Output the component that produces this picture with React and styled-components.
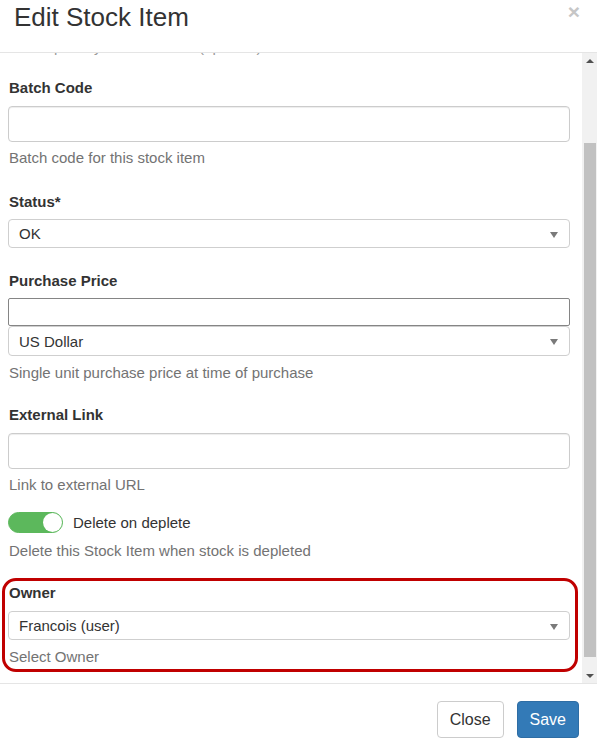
import React from "react";
import styled, { createGlobalStyle } from "styled-components";

const GlobalStyle = createGlobalStyle`
  html, body {
    margin: 0;
    padding: 0;
    background: #fff;
  }
  body {
    font-family: "Liberation Sans", Arial, sans-serif;
    color: #333;
  }
`;

const Modal = styled.div`
  width: 597px;
  height: 742px;
  display: flex;
  flex-direction: column;
  background: #fff;
  overflow: hidden;
`;

const Header = styled.div`
  height: 52px;
  flex: none;
  box-sizing: content-box;
  border-bottom: 1px solid #e5e5e5;
  padding: 0 17px 0 14px;
  display: flex;
  justify-content: space-between;
  align-items: flex-start;
`;

const Title = styled.h4`
  margin: 3px 0 0;
  font-size: 26px;
  line-height: 29px;
  font-weight: 400;
  color: #333;
`;

const CloseX = styled.span`
  margin-top: 1px;
  font-size: 21px;
  line-height: 22px;
  font-weight: 700;
  color: #c6c6c6;
`;

const Body = styled.div`
  height: 630px;
  flex: none;
  display: flex;
`;

const Content = styled.div`
  flex: 1;
  padding: 0 12px 0 8px;
  overflow: hidden;
`;

/* the bottom of a help line scrolled out of view */
const ClippedLine = styled.div`
  box-sizing: content-box;
  height: 2px;
  padding: 0 0 2px 1px;
  overflow: hidden;
  display: flex;
  align-items: flex-end;
  font-size: 15px;
  line-height: 17px;
  color: #999;
`;

const FormGroup = styled.div`
  margin-top: ${(p) => p.$top || 0}px;
`;

const Label = styled.label`
  display: block;
  padding-left: 1px;
  font-size: 15px;
  line-height: 20px;
  font-weight: 700;
  color: #333;
  margin-bottom: ${(p) => (p.$mb == null ? 8 : p.$mb)}px;
`;

const TextInput = styled.div`
  box-sizing: border-box;
  height: ${(p) => p.$h || 36}px;
  border: 1px solid ${(p) => (p.$plain ? "#858585" : "#ccc")};
  border-radius: ${(p) => (p.$plain ? "2px" : "4px")};
  box-shadow: ${(p) => (p.$plain ? "none" : "inset 0 1px 1px rgba(0,0,0,.075)")};
  background: #fff;
`;

const Select = styled.div`
  box-sizing: border-box;
  height: ${(p) => p.$h || 29}px;
  border: 1px solid #cfcfcf;
  border-radius: 4px;
  padding: 0 11px 0 10px;
  display: flex;
  align-items: center;
  justify-content: space-between;
  font-size: 15px;
  color: #333;
  background: #fff;
`;

const Caret = styled.span`
  width: 0;
  height: 0;
  border-left: 4.5px solid transparent;
  border-right: 4.5px solid transparent;
  border-top: 6px solid #7a7a7a;
  margin-top: 2px;
`;

const Help = styled.div`
  margin-top: ${(p) => (p.$mt == null ? 6 : p.$mt)}px;
  padding-left: 1px;
  font-size: 15px;
  line-height: 21px;
  color: #737373;
`;

const ToggleRow = styled.div`
  display: flex;
  align-items: center;
  gap: 10px;
  font-size: 15px;
  color: #333;
`;

const Toggle = styled.span`
  position: relative;
  box-sizing: border-box;
  width: 55px;
  height: 21px;
  border-radius: 11px;
  background: #5cb85c;
  border: 1px solid #5cb85c;
`;

const Knob = styled.span`
  position: absolute;
  top: 0;
  right: 0;
  width: 19px;
  height: 19px;
  border-radius: 50%;
  background: #fff;
`;

const Highlight = styled.div`
  margin: ${(p) => p.$top}px -8px 0 -6px;
  padding: 2px 5px 2px 3px;
  border: 3px solid #c00000;
  border-radius: 14px;
`;

const ScrollTrack = styled.div`
  width: 15px;
  flex: none;
  background: #f1f1f1;
  display: flex;
  flex-direction: column;
  align-items: center;
`;

const ArrowBtn = styled.div`
  height: 15px;
  width: 15px;
  flex: none;
  display: flex;
  align-items: center;
  justify-content: center;
`;

const Arrow = styled.span`
  width: 0;
  height: 0;
  border-left: 4px solid transparent;
  border-right: 4px solid transparent;
  ${(p) => (p.$up ? "border-bottom: 4px solid #505050;" : "border-top: 4px solid #505050;")}
`;

const Thumb = styled.div`
  width: 12px;
  height: 514px;
  margin-top: 75px;
  background: #c1c1c1;
  flex: none;
`;

const Spacer = styled.div`
  flex: 1;
`;

const Footer = styled.div`
  flex: 1;
  border-top: 1px solid #e5e5e5;
  padding: 17px 18px 0 0;
  display: flex;
  justify-content: flex-end;
  align-items: flex-start;
  gap: 13px;
`;

const Button = styled.button`
  box-sizing: border-box;
  height: 37px;
  padding: 0 12px;
  font-family: "Liberation Sans", Arial, sans-serif;
  font-size: 16px;
  border-radius: 4px;
  border: 1px solid ${(p) => (p.$primary ? "#2e6da4" : "#ccc")};
  background: ${(p) => (p.$primary ? "#337ab7" : "#fff")};
  color: ${(p) => (p.$primary ? "#fff" : "#333")};
`;

function SelectBox({ value, h }) {
  return (
    <Select $h={h}>
      <span>{value}</span>
      <Caret />
    </Select>
  );
}

export default function App() {
  return (
    <>
      <GlobalStyle />
      <Modal>
        <Header>
          <Title>Edit Stock Item</Title>
          <CloseX>×</CloseX>
        </Header>
        <Body>
          <Content>
            <ClippedLine>Enter quantity for stock item (optional)</ClippedLine>

            <FormGroup $top={21}>
              <Label>Batch Code</Label>
              <TextInput />
              <Help $mt={5}>Batch code for this stock item</Help>
            </FormGroup>

            <FormGroup $top={24}>
              <Label $mb={7}>Status*</Label>
              <SelectBox value="OK" h={29} />
            </FormGroup>

            <FormGroup $top={23}>
              <Label $mb={7}>Purchase Price</Label>
              <TextInput $plain $h={28} />
              <SelectBox value="US Dollar" h={30} />
              <Help>Single unit purchase price at time of purchase</Help>
            </FormGroup>

            <FormGroup $top={22}>
              <Label>External Link</Label>
              <TextInput />
              <Help $mt={5}>Link to external URL</Help>
            </FormGroup>

            <FormGroup $top={17}>
              <ToggleRow>
                <Toggle>
                  <Knob />
                </Toggle>
                <span>Delete on deplete</span>
              </ToggleRow>
              <Help $mt={7}>Delete this Stock Item when stock is depleted</Help>
            </FormGroup>

            <Highlight $top={17}>
              <Label>Owner</Label>
              <SelectBox value="Francois (user)" h={29} />
              <Help>Select Owner</Help>
            </Highlight>
          </Content>
          <ScrollTrack>
            <ArrowBtn>
              <Arrow $up />
            </ArrowBtn>
            <Thumb />
            <Spacer />
            <ArrowBtn>
              <Arrow />
            </ArrowBtn>
          </ScrollTrack>
        </Body>
        <Footer>
          <Button>Close</Button>
          <Button $primary>Save</Button>
        </Footer>
      </Modal>
    </>
  );
}
